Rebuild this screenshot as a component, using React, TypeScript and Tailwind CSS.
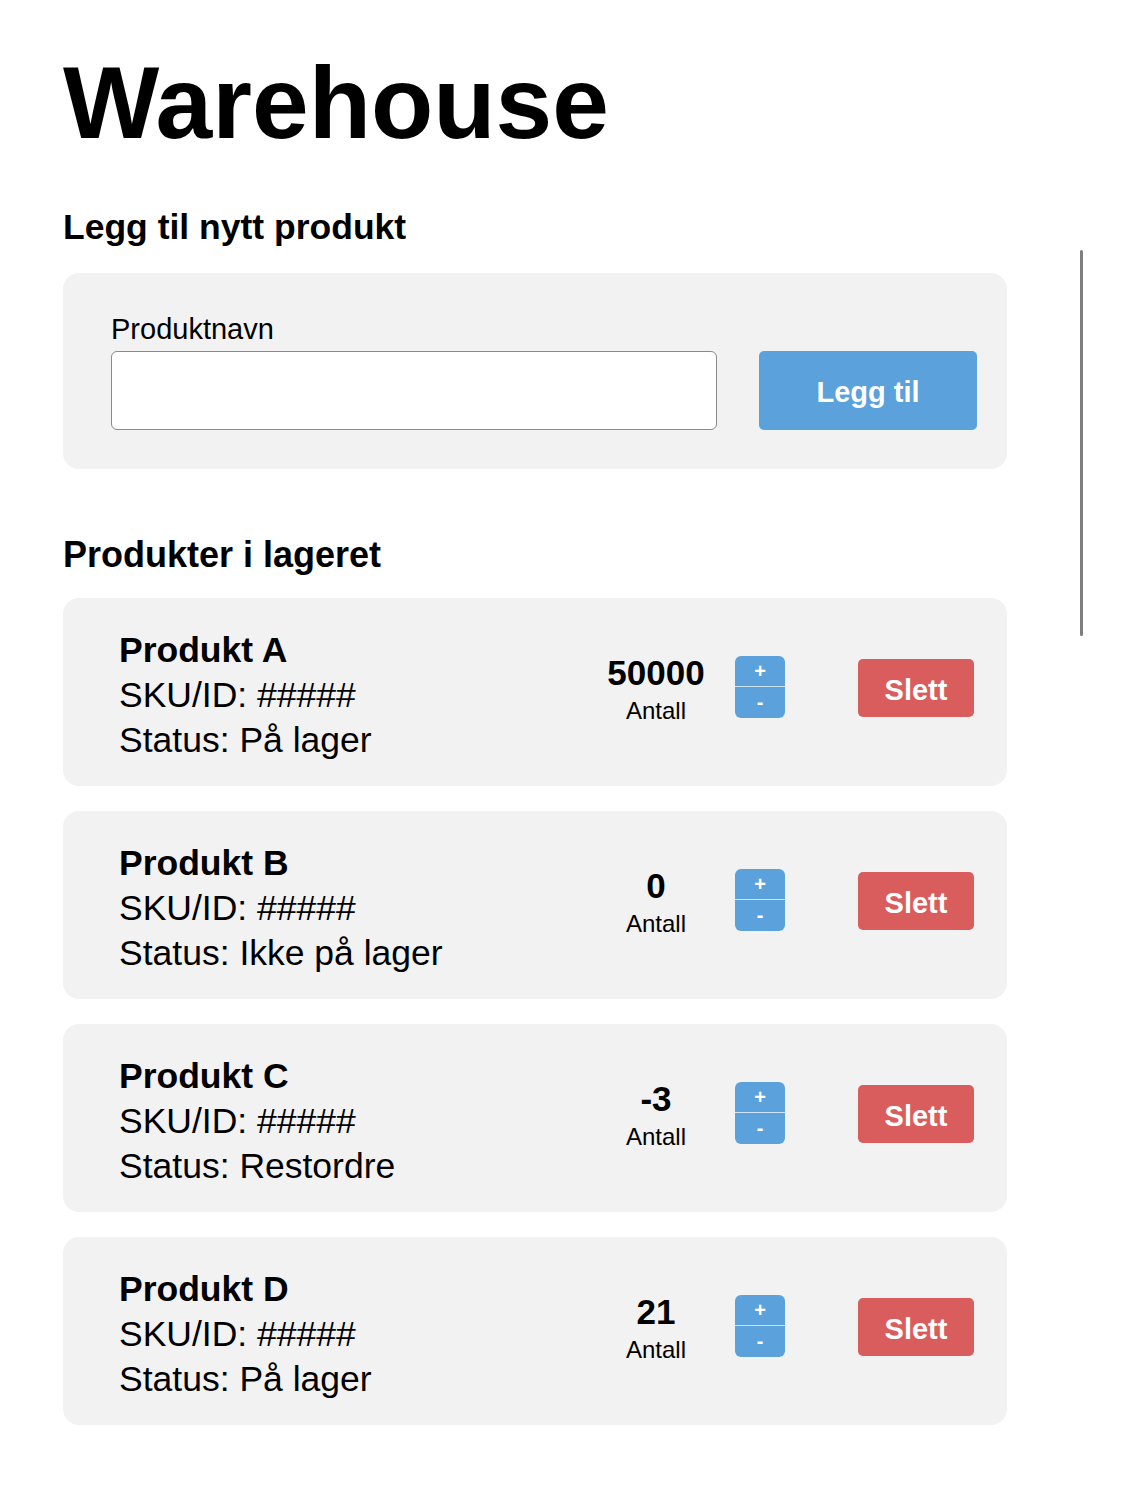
import React from "react";

type Product = {
  name: string;
  sku: string;
  status: string;
  qty: number;
};

const products: Product[] = [
  { name: "Produkt A", sku: "#####", status: "På lager", qty: 50000 },
  { name: "Produkt B", sku: "#####", status: "Ikke på lager", qty: 0 },
  { name: "Produkt C", sku: "#####", status: "Restordre", qty: -3 },
  { name: "Produkt D", sku: "#####", status: "På lager", qty: 21 },
];

function ProductCard({ product }: { product: Product }) {
  return (
    <div className="flex h-[188px] items-center rounded-[16px] bg-[#f2f2f2] pl-[56px] pr-[33px]">
      <div className="flex-1 pt-[8px] text-[35.5px] leading-[45px] text-black">
        <div className="font-bold">{product.name}</div>
        <div>SKU/ID: {product.sku}</div>
        <div>Status: {product.status}</div>
      </div>

      <div className="mb-[6px] flex items-center">
        <div className="flex w-[100px] flex-col items-center">
          <span className="text-[35px] font-bold leading-[44px]">{product.qty}</span>
          <span className="text-[24px] leading-[32px]">Antall</span>
        </div>

        {/* +/- stepper */}
        <div className="mb-[4px] ml-[29px] flex h-[62px] w-[50px] flex-col overflow-hidden rounded-[6px] bg-[#5ba1db] text-white">
          <button className="flex h-[31px] items-center justify-center border-b border-[#cfe2f4] text-[20px] font-bold leading-none">
            +
          </button>
          <button className="flex flex-1 items-center justify-center text-[20px] font-bold leading-none">
            -
          </button>
        </div>

        <button className="mb-[2px] ml-[73px] h-[58px] w-[116px] rounded-[5px] bg-[#d95d5d] pt-[5px] text-[29px] font-bold leading-none text-white">
          Slett
        </button>
      </div>
    </div>
  );
}

export default function App() {
  return (
    <div
      className="relative min-h-[1508px] bg-white text-black"
      style={{ fontFamily: '"Liberation Sans", Arial, sans-serif' }}
    >
      {/* overlay scroll indicator */}
      <div className="absolute left-[1080px] top-[250px] h-[386px] w-[3px] rounded-full bg-[#7f7f7f]" />

      <main className="ml-[63px] w-[944px] pt-[52px]">
        <h1 className="text-[102px] font-bold leading-[102px]">Warehouse</h1>

        <h2 className="mt-[56px] text-[35.5px] font-bold leading-[35.5px]">Legg til nytt produkt</h2>

        <section className="mt-[27px] rounded-[16px] bg-[#f2f2f2] pb-[39px] pl-[48px] pr-[30px] pt-[40px]">
          <label className="block text-[29px] leading-[33px]">Produktnavn</label>
          <div className="mt-[5px] flex gap-[42px]">
            <input
              type="text"
              className="h-[79px] w-[606px] rounded-[6px] border border-[#8a8a8a] bg-white px-3 text-[29px] outline-none"
            />
            <button className="h-[79px] w-[218px] rounded-[5px] bg-[#5ba1db] pt-[5px] text-[29px] font-bold leading-none text-white">
              Legg til
            </button>
          </div>
        </section>

        <h2 className="mt-[68px] text-[36px] font-bold leading-[36px]">Produkter i lageret</h2>

        <div className="mt-[25px] flex flex-col gap-[25px]">
          {products.map((p) => (
            <ProductCard key={p.name} product={p} />
          ))}
        </div>
      </main>
    </div>
  );
}
